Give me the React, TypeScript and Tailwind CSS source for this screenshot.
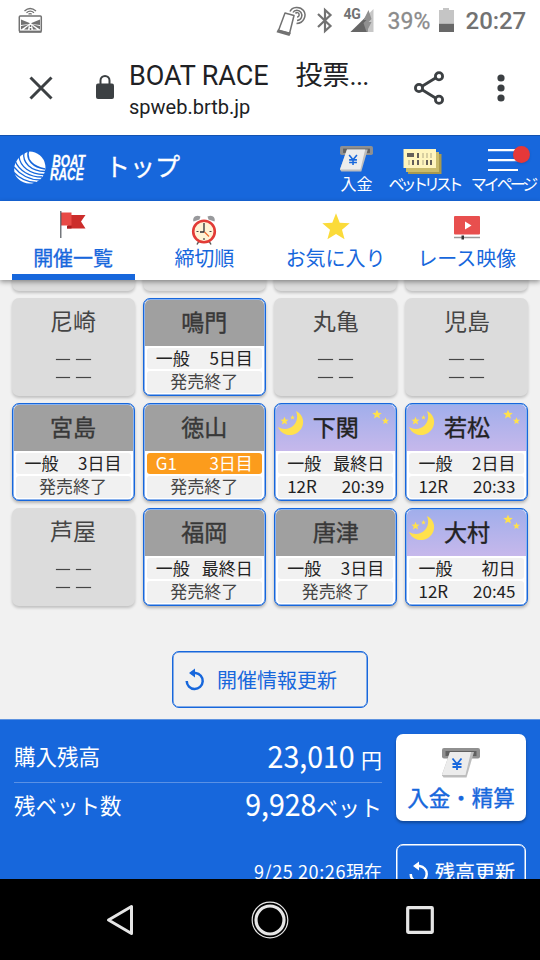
import { type ReactNode } from "react";
import clsx from "clsx";

type Venue = {
  name: string;
  state: "none" | "closed" | "night";
  grade?: string;
  day?: string;
  time?: string;
};

const venues: Venue[] = [
  { name: "", state: "none" },
  { name: "", state: "none" },
  { name: "", state: "none" },
  { name: "", state: "none" },
  { name: "尼崎", state: "none" },
  { name: "鳴門", state: "closed", grade: "一般", day: "5日目" },
  { name: "丸亀", state: "none" },
  { name: "児島", state: "none" },
  { name: "宮島", state: "closed", grade: "一般", day: "3日目" },
  { name: "徳山", state: "closed", grade: "G1", day: "3日目" },
  { name: "下関", state: "night", grade: "一般", day: "最終日", time: "20:39" },
  { name: "若松", state: "night", grade: "一般", day: "2日目", time: "20:33" },
  { name: "芦屋", state: "none" },
  { name: "福岡", state: "closed", grade: "一般", day: "最終日" },
  { name: "唐津", state: "closed", grade: "一般", day: "3日目" },
  { name: "大村", state: "night", grade: "一般", day: "初日", time: "20:45" },
];

const STAR = "M0 -10 L2.6 -3.4 L9.6 -3.1 L4.2 1.4 L6 8.2 L0 4.4 L-6 8.2 L-4.2 1.4 L-9.6 -3.1 L-2.6 -3.4Z";

function StatusBar() {
  return (
    <div className="flex h-[43px] shrink-0 items-start justify-between pr-[14px] pl-[18px] font-['Roboto',sans-serif] text-[#727272]">
      <svg width="25" height="36" viewBox="0 0 25 36" fill="none" stroke="#727272">
        <path d="M6.500 11q5.500-5 11.500 0M8.500 12.700q3.700-3.200 7.500 0M10.500 14.200q1.500-1.200 3.200 0" strokeWidth="1.300" />
        <rect x="1.300" y="16" width="22" height="15.500" rx="1" strokeWidth="1.500" />
        <path d="M1 31.800h22.500" strokeWidth="2" />
        <path d="M3 19.500l8.500 3.500v1L3 25zM22 19.500L13.500 23v1l8.500 1zM3 26l7.500-1.500L3 29.500zM22 26l-7.500-1.500L22 29.500zM10.800 25.500L6 29.500h4zM14 25.500l5 4h-4z" fill="#727272" stroke="none" />
        <path d="M12.500 25v5" strokeWidth="1.500" strokeDasharray="2 1" />
      </svg>
      <div className="flex items-start">
        <svg width="32" height="38" viewBox="0 0 32 38" fill="none" stroke="#727272" className="mr-[10px]">
          <path d="M10 13l9 2.500-4.500 18-11-3z" strokeWidth="1.500" strokeLinejoin="round" />
          <path d="M3.500 30.500l11 3-.6 1.200-11-3z" strokeWidth="2" fill="#727272" />
          <path d="M15 11.500C17 6.500 25 6 28.500 10.500s.5 13-7 13" strokeWidth="1.500" />
          <path d="M18 12.500c1.500-3 6-3 8 0s.5 7.500-4 8" strokeWidth="1.500" />
          <path d="M20.500 13.500c1-1.500 3-1 3.500.5s-.5 3-2 3" strokeWidth="1.500" />
        </svg>
        <svg width="16" height="36" viewBox="0 0 16 36" fill="none" stroke="#727272" strokeWidth="2.200" className="mr-[11px]">
          <path d="M1 14l12.500 12-5.500 5V10l5.500 5L1 27" />
        </svg>
        <div className="relative mr-[14px] h-[36px] w-[30px]">
          <svg width="30" height="36" viewBox="0 0 30 36">
            <path d="M29.500 9v23h-23z" fill="#c7c7c7" />
            <path d="M23.500 15.500V32h-17z" fill="#666" />
            <path d="M24.500 10l-5 10h3l-3 3 3 9 5-10h-3l3-3z" fill="#909090" />
          </svg>
          <span className="absolute top-[7px] left-0 text-[14px] leading-[14px] font-bold tracking-[-0.5px]">4G</span>
        </div>
        <span className="w-[44px] pt-[8px] text-[23px] leading-[28px] text-[#8b8b8b] [-webkit-text-stroke:0.3px_#8b8b8b]">39%</span>
        <svg width="17" height="36" viewBox="0 0 17 36" className="mr-[11px] ml-[6px]">
          <path d="M1 10h4V8h6v2h5v13H1z" fill="#c5c5c5" />
          <path d="M1 23.500h15V32H1z" fill="#686868" />
        </svg>
        <span className="pt-[7px] text-[24px] leading-[28px] font-medium tracking-[-0.1px] whitespace-nowrap">20:27</span>
      </div>
    </div>
  );
}

function BrowserBar() {
  return (
    <div className="flex h-[92px] shrink-0 items-start font-['Roboto','Noto_Sans_CJK_JP',sans-serif] text-[#202124]">
      <svg width="24" height="24" viewBox="0 0 24 24" className="mt-[33px] ml-[29px] shrink-0" stroke="#3c4043" strokeWidth="3">
        <path d="M1.500 1.500l21 21M22.500 1.500l-21 21" />
      </svg>
      <svg width="20" height="26" viewBox="0 0 20 26" className="mt-[31px] ml-[42px] shrink-0">
        <rect x="1" y="9.500" width="18" height="15.500" rx="2" fill="#3c4043" />
        <path d="M5.500 10V6.500a4.500 4.500 0 019 0V10" fill="none" stroke="#3c4043" strokeWidth="2" />
      </svg>
      <div className="ml-[14px] w-[250px] whitespace-nowrap">
        <div className="mt-[15px] flex h-[36px] items-center text-[27px] leading-[36px]">
          <span className="w-[166.500px] tracking-[-0.1px]">BOAT RACE</span>
          <span>投票<span className="tracking-[-0.7px]">...</span></span>
        </div>
        <div className="mt-[1px] text-[20px] leading-[24px]">spweb.brtb.jp</div>
      </div>
      <svg width="32" height="36" viewBox="0 0 32 36" className="mt-[27px] ml-[34px] shrink-0" fill="none" stroke="#3c4043" strokeWidth="2.800">
        <path d="M9.500 16L22.500 8M9.500 20L22.500 28" />
        <circle cx="6" cy="18" r="3.600" />
        <circle cx="26" cy="6.300" r="3.600" />
        <circle cx="26" cy="29.700" r="3.600" />
      </svg>
      <svg width="8" height="28" viewBox="0 0 8 28" className="mt-[31px] ml-[52px] shrink-0" fill="#3c4043">
        <circle cx="4" cy="4" r="3.600" />
        <circle cx="4" cy="14" r="3.600" />
        <circle cx="4" cy="24" r="3.600" />
      </svg>
    </div>
  );
}

function CashIcon({ width, height }: { width: number; height: number }) {
  return (
    <svg width={width} height={height} viewBox="0 0 38 30">
      <rect x="0" y="0" width="38" height="10.500" rx="2" fill="#909090" />
      <rect x="3.500" y="3" width="31" height="5" fill="#606060" />
      <path d="M8 4h24l-7.500 25.500H1.500L-.2 27z" fill="#bdbdbd" />
      <path d="M8 4h21L23.500 27H0z" fill="#ececec" />
      <path d="M10.500 10.500l4.500 5.500 4.500-5.500M15 15.500v6.500M10.500 16h9M10.500 19h9" fill="none" stroke="#1767dc" strokeWidth="1.800" />
    </svg>
  );
}

function Logo() {
  return (
    <div className="flex items-center">
      <svg width="32" height="33" viewBox="0 0 32 33">
        <path d="M15.500.5A16 16 0 1 1 1.300 24C.2 21.500 0 18 .5 15 2 9 6.500 3 15.500.5z" fill="#fff" />
        <g fill="none" stroke="#1767dc" strokeWidth="1.300">
          <path d="M14.500 0C12 9 19 16 31 18" strokeWidth="1.600" />
          <path d="M10 1C8 12 17 20 31 20.500" />
          <path d="M5 5C6 16 16 23 30 23.500" />
          <path d="M1 9.500C5 20 16 26 28 26" />
          <path d="M0 16C6 24 16 29 26 29" />
          <path d="M0 21.500C6 28 13 31 22 31.500" />
        </g>
      </svg>
      <div className="ml-[4px] w-[39px] origin-left scale-x-[0.74] font-['Liberation_Sans',sans-serif] text-[16px] leading-[13px] font-bold whitespace-nowrap text-white italic [-webkit-text-stroke:0.3px_white]">
        <div className="pl-[3px]">BOAT</div>
        <div>RACE</div>
      </div>
    </div>
  );
}

function Header() {
  return (
    <header className="flex h-[66px] shrink-0 items-start border-t border-[#1352b0] bg-[#1767dc] text-white">
      <div className="mt-[15px] ml-[14px]">
        <Logo />
      </div>
      <h1 className="mt-[10px] ml-[16px] w-[230px] text-[25px] leading-[38px] font-normal [-webkit-text-stroke:0.3px_white]">トップ</h1>
      <div className="flex w-[43px] flex-col items-center pt-[10px] whitespace-nowrap">
        <CashIcon width={33} height={26} />
        <span className="mt-px text-[16px] leading-[20px]">入金</span>
      </div>
      <div className="ml-[8px] flex w-[76px] flex-col items-center pt-[13px] whitespace-nowrap">
        <svg width="39" height="25" viewBox="0 0 39 25" className="mr-[3px]">
          <path d="M5 5h33.500v20H5z" fill="#a89a4e" />
          <path d="M3 3h33v20H3z" fill="#cabc6c" />
          <path d="M.5 0H33v19H.5z" fill="#fff5bd" />
          <path d="M4 4h7v4H4zM14 4h2v5h-2zM9 11h2v5H9zM14 11h2v5h-2zM23 11h2v5h-2zM27 11h2v5h-2z" fill="#65605a" />
          <path d="M19 4h2v5h-2zM23 4h2v5h-2zM27 4h2v5h-2zM5 11h2v5H5zM19 11h2v5h-2z" fill="#d8cfa1" />
        </svg>
        <span className="-mt-px text-[16px] leading-[20px] tracking-[-4.200px]">ベットリスト</span>
      </div>
      <div className="relative ml-[7px] flex w-[68px] shrink-0 flex-col items-center pt-[13px] whitespace-nowrap">
        <svg width="30" height="23" viewBox="0 0 30 23" stroke="#fff" strokeWidth="2.200" className="mr-px">
          <path d="M0 1.200h30M0 11.200h30M0 21h30" />
        </svg>
        <span className="absolute top-[10px] left-[44px] size-[17px] rounded-full bg-[#e53839] shadow-sm" />
        <span className="mt-px text-[16px] leading-[20px] tracking-[-3px]">マイページ</span>
      </div>
    </header>
  );
}

function Tab({ label, active, children }: { label: string; active?: boolean; children: ReactNode }) {
  return (
    <div className={clsx("flex h-[79px] flex-col items-center border-b-[6px]", active ? "border-[#1767dc]" : "border-transparent")}>
      <div className="flex h-[46px] items-start">{children}</div>
      <span className={clsx("text-[20px] leading-[22px] whitespace-nowrap text-[#1767dc]", active && "[-webkit-text-stroke:0.3px_#1767dc]")}>{label}</span>
    </div>
  );
}

function Tabs() {
  return (
    <nav className="relative z-10 grid h-[79px] shrink-0 grid-cols-4 gap-x-[8px] bg-white px-[11.500px] shadow-[0_2px_5px_rgba(0,0,0,0.4)]">
      <Tab label="開催一覧" active>
        <svg width="26" height="28" viewBox="0 0 26 28" className="mt-[10px]">
          <path d="M11 4h14.500l-4.500 6.500 4.500 7H7z" fill="#cc2d2b" />
          <path d="M7 14.500h4.500v3H7z" fill="#a81e20" />
          <path d="M1 1.500h10.500v13H1z" fill="#e84a46" />
          <path d="M.8 0v27" stroke="#52565c" strokeWidth="1.200" />
        </svg>
      </Tab>
      <Tab label="締切順">
        <svg width="26" height="31" viewBox="0 0 26 31" className="mt-[13px]">
          <path d="M2.500 7.500C1 3.500 5 0 9.500 2.500l-1 3zM23.500 7.500C25 3.500 21 0 16.500 2.500l1 3z" fill="#98999c" />
          <path d="M8 27l-2 3.500M18 27l2 3.500" stroke="#555" strokeWidth="1.500" />
          <circle cx="13" cy="17.500" r="10.800" fill="#fff3d6" stroke="#e23b36" strokeWidth="2.600" />
          <path d="M13 9v9H9" stroke="#2f2f35" strokeWidth="1.300" fill="none" />
          <path d="M5.500 17.500h2M18.500 17.500h2M13 24v2" stroke="#444" strokeWidth="1.200" />
          <path d="M13.500 18l4.500 4.500" stroke="#ed6c32" strokeWidth="1.300" />
        </svg>
      </Tab>
      <Tab label="お気に入り">
        <svg width="28" height="27" viewBox="-9.800 -10 19.600 18.400" className="mt-[12px]">
          <path d={STAR} fill="#fbdb3a" />
        </svg>
      </Tab>
      <Tab label="レース映像">
        <svg width="26" height="24" viewBox="0 0 26 24" className="mt-[15px]">
          <rect width="26" height="18.500" rx="1" fill="#e84f4e" />
          <path d="M11 5.500l6.500 4-6.500 4z" fill="#fff" />
          <path d="M0 21.500h26" stroke="#9a9a9a" strokeWidth="1.500" />
          <path d="M7.500 19.500h2.500v4H7.500z" fill="#333" />
        </svg>
      </Tab>
    </nav>
  );
}

function NightSky() {
  return (
    <svg width="119" height="46" viewBox="0 0 119 46" className="absolute top-0 left-0" fill="#ffe14d">
      <path d="M20 6c6 3 8.500 9 6.500 15-2 6-8 9.500-14 9C7.500 29.500 3.500 26 2 22c5 3 11.500 2.500 15.500-1.500S22 11 20 6z" />
      <path d={STAR} transform="translate(8.500 16) scale(.43)" />
      <path d={STAR} transform="translate(16.500 12.500) scale(.25)" />
      <path d={STAR} transform="translate(101 9.500) scale(.5)" />
      <path d={STAR} transform="translate(109.500 16) scale(.37)" />
    </svg>
  );
}

function VenueCard({ venue }: { venue: Venue }) {
  if (venue.state === "none") {
    return (
      <div className="h-[98px] rounded-[7px] bg-[#dcdcdc] text-center text-[#454545] shadow-[0_2px_3px_rgba(0,0,0,0.2)]">
        <div className="h-[53px] text-[23px] leading-[45px]">{venue.name}</div>
        {venue.name && (
          <div className="mx-auto grid w-[35px] grid-cols-2 gap-x-[6px] gap-y-[17px] pt-[8px]">
            {[0, 1, 2, 3].map((i) => (
              <span key={i} className="h-px bg-[#454545] shadow-[0_0_1px_#454545]" />
            ))}
          </div>
        )}
      </div>
    );
  }

  const night = venue.state === "night";
  const g1 = venue.grade === "G1";

  return (
    <div className="h-[98px] overflow-hidden rounded-[7px] border border-[#1767dc] bg-white p-px shadow-[inset_0_0_0_0.5px_#1767dc,0_2px_3px_rgba(0,0,0,0.25)]">
      <div
        className={clsx(
          "relative h-[46px] rounded-t-[5px] text-center text-[23px] leading-[43px]",
          night
            ? "bg-linear-to-b from-[#a1aeeb] to-[#c6b8eb] text-[#222] [-webkit-text-stroke:0.4px_#222]"
            : "bg-[#a0a0a0] text-[#383838] [-webkit-text-stroke:0.4px_#383838]",
        )}
      >
        {night && <NightSky />}
        <span className="relative">{venue.name}</span>
      </div>
      <div
        className={clsx(
          "mx-[2px] mt-[2px] flex h-[21px] justify-between rounded-[3px] px-[9px] text-[17px] leading-[20px]",
          g1 ? "bg-[#fc9c1c] text-white" : "bg-[#f1f1f1] text-[#222]",
        )}
      >
        <span>{venue.grade}</span>
        <span>{venue.day}</span>
      </div>
      <div
        className={clsx(
          "mx-[2px] mt-[2px] flex h-[22px] rounded-[3px] bg-[#f1f1f1] px-[9px] text-[17px] leading-[20px]",
          night ? "justify-between text-[#222]" : "justify-center text-[#444]",
        )}
      >
        {night ? (
          <>
            <span>12R</span>
            <span>{venue.time}</span>
          </>
        ) : (
          <span>発売終了</span>
        )}
      </div>
    </div>
  );
}

function ReloadIcon({ className }: { className?: string }) {
  return (
    <svg width="20" height="23" viewBox="0 0 20 23" className={className}>
      <path d="M6 5h4.500a8 8 0 11-8.800 8" fill="none" stroke="currentColor" strokeWidth="2.500" />
      <path d="M4 5l6-4.500v9z" fill="currentColor" />
    </svg>
  );
}

function Balance() {
  return (
    <section className="flex h-[160px] shrink-0 items-start overflow-hidden border-t border-[#5e93e0] bg-[#1767dc] pr-[14px] pl-[14px] text-white">
      <div className="w-[368px] whitespace-nowrap">
        <div className="flex h-[63px] items-start justify-between border-b border-[#5a91e5] pt-[15px]">
          <span className="text-[21.500px] leading-[42px]">購入残高</span>
          <span className="flex items-baseline">
            <span className="origin-right scale-x-[0.920] text-[31px] leading-[40px] [-webkit-text-stroke:0.1px_white]">23,010</span>
            <span className="ml-[6px] text-[21px]">円</span>
          </span>
        </div>
        <div className="flex h-[76px] items-start justify-between">
          <span className="text-[21.500px] leading-[43px]">残ベット数</span>
          <span className="flex items-baseline">
            <span className="origin-right scale-x-[0.920] text-[31px] leading-[40px] [-webkit-text-stroke:0.1px_white]">9,928</span>
            <span className="text-[22px]">ベット</span>
          </span>
        </div>
        <div className="text-right text-[18px] leading-[25px]">
          <span className="tracking-[0.600px]">9/25 20:26</span>現在
        </div>
      </div>
      <div className="ml-[14px] w-[130px] shrink-0">
        <div className="mt-[14px] flex h-[87px] flex-col items-center rounded-[7px] bg-white text-[#1767dc] shadow-[0_2px_3px_rgba(0,0,0,0.3)]">
          <div className="mt-[14px] h-[30px]">
            <CashIcon width={38} height={30} />
          </div>
          <span className="mt-[4px] text-[21.500px] leading-[30px] whitespace-nowrap [-webkit-text-stroke:0.4px_#1767dc]">入金・精算</span>
        </div>
        <div className="mt-[23px] flex h-[58px] items-start rounded-[7px] border border-white pl-[12px] shadow-[inset_0_0_0_0.5px_white]">
          <ReloadIcon className="mt-[16px]" />
          <span className="mt-[12px] ml-[6px] text-[20px] leading-[30px] whitespace-nowrap [-webkit-text-stroke:0.15px_white]">残高更新</span>
        </div>
      </div>
    </section>
  );
}

function NavBar() {
  return (
    <div className="flex h-[81px] shrink-0 items-center justify-between bg-black px-[105px]">
      <svg width="30" height="34" viewBox="0 0 30 34">
        <path d="M3.500 17L26.500 3.500v27z" fill="none" stroke="#e6e6e6" strokeWidth="3" strokeLinejoin="round" />
      </svg>
      <svg width="38" height="38" viewBox="0 0 38 38" fill="none" stroke="#e6e6e6">
        <circle cx="19" cy="19" r="17.800" strokeWidth="1.200" />
        <circle cx="19" cy="19" r="14" strokeWidth="3.200" />
      </svg>
      <svg width="30" height="30" viewBox="0 0 30 30">
        <rect x="2.700" y="2.700" width="24.600" height="24.600" rx=".5" fill="none" stroke="#e6e6e6" strokeWidth="3.200" />
      </svg>
    </div>
  );
}

export default function App() {
  return (
    <div className="flex h-[960px] w-[540px] flex-col overflow-hidden bg-white font-['Noto_Sans_CJK_JP',sans-serif]">
      <StatusBar />
      <BrowserBar />
      <Header />
      <Tabs />
      <main className="h-[439px] shrink-0 overflow-hidden bg-[#f1f1f1] px-[11.500px]">
        <div className="-mt-[87px] grid grid-cols-[repeat(4,123px)] justify-between gap-y-[7px]">
          {venues.map((venue, i) => (
            <VenueCard key={i} venue={venue} />
          ))}
        </div>
        <button className="mx-auto mt-[45px] flex h-[57px] w-[196px] items-center rounded-[7px] border border-[#1767dc] pl-[12px] text-[20px] whitespace-nowrap text-[#1767dc] shadow-[inset_0_0_0_0.5px_#1767dc]">
          <ReloadIcon />
          <span className="ml-[12px] leading-[30px]">開催情報更新</span>
        </button>
      </main>
      <Balance />
      <NavBar />
    </div>
  );
}
